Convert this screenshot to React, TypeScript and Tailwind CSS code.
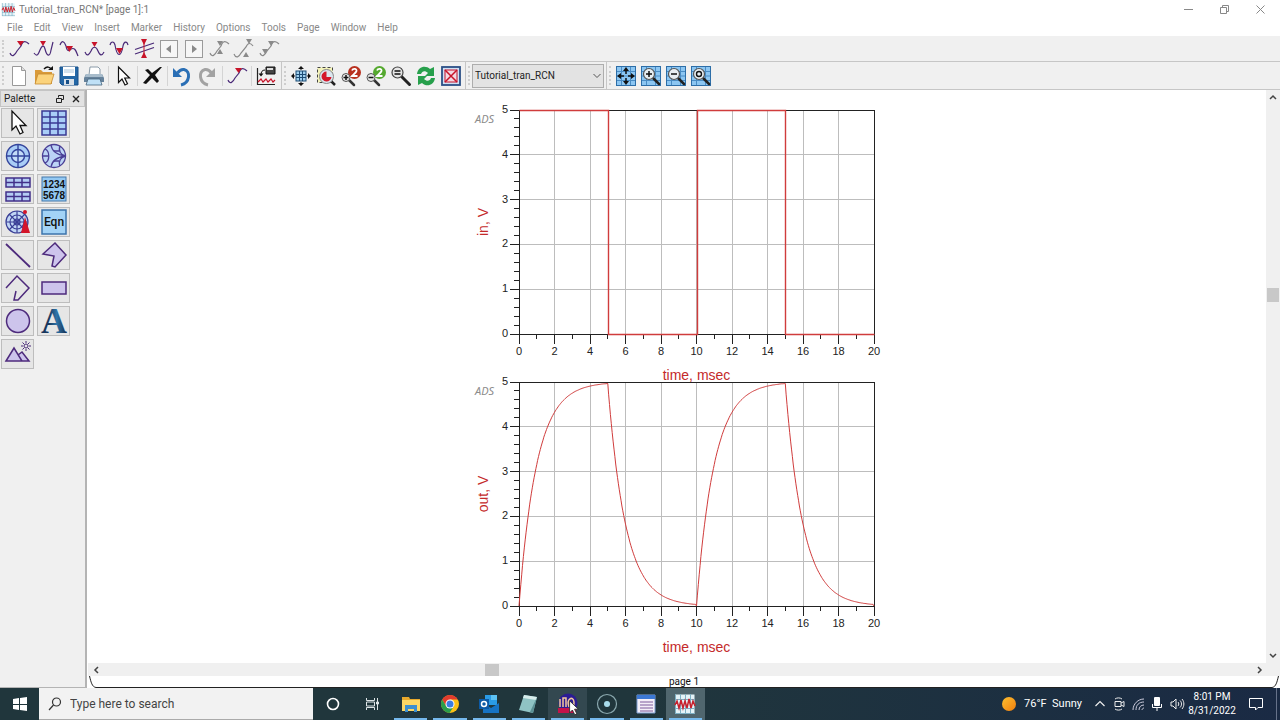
import type { ReactNode } from 'react'

const PURPLE = '#4a2a78'
const RED = '#c8142a'
const GRAY = '#8a8a8a'

const MENUS = ['File', 'Edit', 'View', 'Insert', 'Marker', 'History', 'Options', 'Tools', 'Page', 'Window', 'Help']

interface IconProps {
  children: ReactNode
  size?: number
  box?: number
}

function Icon({ children, size = 20, box = 20 }: IconProps) {
  return (
    <svg width={size} height={size} viewBox={`0 0 ${box} ${box}`} fill="none" className="shrink-0 overflow-visible">
      {children}
    </svg>
  )
}

/* ---------- Marker toolbar ---------- */

interface WaveProps {
  d: string
  marks: string[]
  color?: string
  mark?: string
}

function Wave({ d, marks, color = PURPLE, mark = RED }: WaveProps) {
  return (
    <Icon>
      <path d={d} stroke={color} strokeWidth="1.2" />
      {marks.map((m) => <path key={m} d={m} fill={mark} />)}
    </Icon>
  )
}

const RISING = 'M1 14C3 19 6 16 8 12L12 7C14 1 17 2 20 5'

function StepIcon({ d }: { d: string }) {
  return (
    <Icon>
      <rect x="1.5" y="1.5" width="17" height="17" stroke="#9a9a9a" fill="#f6f6f6" />
      <path d={d} fill={GRAY} />
    </Icon>
  )
}

const MARKER_TOOLS: { label: string; icon: ReactNode }[] = [
  { label: 'New marker', icon: <Wave d={RISING} marks={['M8 2h7l-3.500 5z']} /> },
  { label: 'Peak marker', icon: <Wave d="M0 14C3 18 4 16 6 11C8 6 10 6 11 10C13 18 16 18 17 11L19 3" marks={['M6 2h6l-3 5z']} /> },
  { label: 'Valley marker', icon: <Wave d="M1 6C3 1 5 2 7 7C8 13 10 12 12 10C16 8 17 12 19 17" marks={['M7 7h7l-3.500 6z']} /> },
  { label: 'Max marker', icon: <Wave d="M1 13C3 18 5 16 7 12C9 7 12 7 14 12C16 17 18 17 20 13" marks={['M7.500 3h6l-3 5z']} /> },
  { label: 'Min marker', icon: <Wave d="M1 6C2 2 5 2 6 6C8 18 12 19 14 7C15 2 18 2 19 6" marks={['M7 9h7l-3.500 6z']} /> },
  {
    label: 'Line marker',
    icon: (
      <Icon>
        <path d="M1 10.500L20 4M1 15L20 8.500" stroke={PURPLE} strokeWidth="1.300" />
        <path d="M10 0v19" stroke={RED} />
        <path d="M7 0h6l-3 6zM7 19h6l-3-6z" fill={RED} />
      </Icon>
    ),
  },
  { label: 'Previous point', icon: <StepIcon d="M12 6v8l-5-4z" /> },
  { label: 'Next point', icon: <StepIcon d="M8 6v8l5-4z" /> },
  { label: 'Delta markers', icon: <Wave d={RISING} marks={['M8 2h6l-3 5z', 'M8 15h6l-3-5z']} color={GRAY} mark={GRAY} /> },
  { label: 'Delta up', icon: <Wave d="M0 15C2 20 5 18 7 14L12 8C14 3 17 4 19 7" marks={['M12 0h6l-3 5z', 'M9 18h6l-3-5z']} color={GRAY} mark={GRAY} /> },
  { label: 'Delta down', icon: <Wave d={RISING} marks={['M9 2h6l-3 5z', 'M3 10h6l-3 5z']} color={GRAY} mark={GRAY} /> },
]

/* ---------- Main toolbar ---------- */

function Lens({ x, y, fill = '#e8eef2' }: { x: number; y: number; fill?: string }) {
  return (
    <>
      <path d={`M${x + 4} ${y + 4}L${x + 10} ${y + 10}`} stroke="#222" strokeWidth="2.500" strokeLinecap="round" />
      <circle cx={x} cy={y} r="5.500" fill={fill} stroke="#555" strokeWidth="1.200" />
    </>
  )
}

const newIcon = (
  <Icon>
    <path d="M3.500 .5h9l4 4v15h-13z" fill="#fff" stroke="#999" />
    <path d="M12.500 .5v4h4" fill="#ddd" stroke="#999" />
  </Icon>
)
const openIcon = (
  <Icon>
    <path d="M1 4h6l2 2h9v12H1z" fill="#d99a3a" />
    <path d="M4 8h16l-3 10H1z" fill="#fbd37c" stroke="#c58a30" strokeWidth=".8" />
    <path d="M10 3C13 0 16 1 17 3" stroke="#111" strokeWidth="1.500" />
    <path d="M14 4h5v-4z" fill="#111" />
  </Icon>
)
const saveIcon = (
  <Icon>
    <path d="M1 1h18v18H3l-2-2z" fill="#2467a6" stroke="#174f88" />
    <path d="M4 1h12v9H4z" fill="#fff" />
    <path d="M5 4h10M5 6h10" stroke="#a8c4dc" />
    <path d="M5 13h10v6H5z" fill="#d8e0e8" />
    <path d="M7 14h3v4H7z" fill="#174f88" />
  </Icon>
)
const printIcon = (
  <Icon>
    <path d="M6 1h8l2 2v6H5z" fill="#fff" stroke="#6f8494" strokeWidth=".8" />
    <path d="M2 8h16l2 4v4H0v-4z" fill="#66829b" />
    <path d="M2 8h16l1 3H1z" fill="#a8bccb" />
    <path d="M4 13h12l2 6H2z" fill="#bfe0f6" stroke="#46647e" strokeWidth=".8" />
  </Icon>
)
const pointerIcon = (
  <Icon>
    <path d="M5.500 1v15.500l3.500-3.500 3 6 2.500-1.200-2.800-5.800h4.800z" fill="#fff" stroke="#111" strokeWidth="1.200" />
  </Icon>
)
const deleteIcon = (
  <Icon>
    <path d="M2 4l3-1 4 4 8-6h2l-7 8 4 6-2 2-5-5-6 6-3-1 7-8z" fill="#111" />
  </Icon>
)
const undoIcon = (
  <Icon>
    <path d="M9 19C18 17 19 5 12 3.500C9 3 7 5 5.500 7" stroke="#2a6fb5" strokeWidth="3" />
    <path d="M1 2v9h9z" fill="#2a6fb5" />
  </Icon>
)
const redoIcon = (
  <Icon>
    <path d="M11 19C2 17 1 5 8 3.500C11 3 13 5 14.500 7" stroke="#a2a2a2" strokeWidth="3" />
    <path d="M18 2v9H9z" fill="#a2a2a2" />
  </Icon>
)
const plotIcon = (
  <Icon>
    <path d="M1.500 2v17M1 18.500h18" stroke="#222" strokeWidth="1.200" />
    <path d="M10 1h9v7h-9z" fill="#444" stroke="#111" />
    <path d="M11 2h6v2h-6z" fill="#ddd" />
    <path d="M9 4C6 4 5 6 5 9" stroke="#111" />
    <path d="M2.500 7.500h5l-2.500 3z" fill="#111" />
    <path d="M2 16l3-3 2 3 3-3 2 3 3-3 2 3 2-2" stroke={RED} strokeWidth="1.200" />
  </Icon>
)
const fitIcon = (
  <Icon>
    <rect x="5" y="5" width="10" height="10" fill="#9fd0ef" stroke="#1d4c74" />
    <path d="M8.500 5v10M11.500 5v10M5 8.500h10M5 11.500h10" stroke="#1d4c74" />
    <path d="M10 0l3 3H7zM10 20l3-3H7zM0 10l3-3v6zM20 10l-3-3v6z" fill="#111" />
    <path d="M10 2v2M10 16v2M2 10h2M16 10h2" stroke="#111" />
  </Icon>
)
const zoomAreaIcon = (
  <Icon>
    <rect x="1.500" y="1.500" width="15" height="15" fill="#f4f3b8" stroke="#444" strokeDasharray="3 2" />
    <path d="M14 14l5 5" stroke="#222" strokeWidth="2.500" />
    <circle cx="10.500" cy="10.500" r="7" fill="#dbe6ef" stroke="#888" />
    <path d="M10.500 5.500a5 5 0 1 0 5 5.500h-5z" fill="#d4182b" />
  </Icon>
)
function zoomTwo(color: string, plus: boolean) {
  return (
    <Icon>
      <path d="M8 14l5 5" stroke="#333" strokeWidth="2.500" strokeLinecap="round" />
      <circle cx="13.500" cy="6.500" r="6.500" fill={color} />
      <path d="M11 4.500c1-2.500 5-2 4.500.5-.3 1.500-2.500 3-4.500 5h5.500" stroke="#fff" strokeWidth="1.800" />
      <circle cx="5" cy="11.500" r="4" fill="#e6e6e6" stroke="#555" />
      <path d={plus ? 'M2.500 11.500h5M5 9v5' : 'M2.500 11.500h5'} stroke="#111" strokeWidth="1.500" />
    </Icon>
  )
}
const zoomEqIcon = (
  <Icon>
    <path d="M10.500 10.500l8 8" stroke="#222" strokeWidth="3" strokeLinecap="round" />
    <circle cx="6.500" cy="6.500" r="5.500" fill="#e6e6e6" stroke="#444" strokeWidth="1.200" />
    <path d="M3.500 5h6M3.500 8h6" stroke="#111" strokeWidth="1.300" />
  </Icon>
)
const refreshIcon = (
  <Icon>
    <path d="M1 8C2 0 10-1 14 3l4-2v9H9l3-3C9 4 6 5 5 8z" fill="#27a04c" />
    <path d="M19 12C18 20 10 21 6 17l-4 2v-9h9l-3 3c3 3 6 2 7-1z" fill="#27a04c" />
  </Icon>
)
const stopIcon = (
  <Icon>
    <rect x="1" y="1" width="18" height="18" fill="#cfe0f4" stroke="#2b4f86" strokeWidth="1.800" />
    <rect x="4" y="4" width="12" height="12" fill="#f3d9e2" stroke={RED} />
    <path d="M4 4l12 12M16 4L4 16" stroke={RED} strokeWidth="1.500" />
  </Icon>
)

function GridTile({ children }: { children: ReactNode }) {
  return (
    <Icon>
      <rect x=".5" y=".5" width="19" height="19" fill="#8cc6f2" stroke="#2d6ea8" />
      <path d="M5.500 1v18M14.500 1v18M1 5.500h18M1 10h18M1 14.500h18" stroke="#4a8cc4" />
      {children}
    </Icon>
  )
}

const FILE_GROUPS: { label: string; icon: ReactNode }[][] = [
  [
    { label: 'New', icon: newIcon },
    { label: 'Open', icon: openIcon },
    { label: 'Save', icon: saveIcon },
    { label: 'Print', icon: printIcon },
  ],
  [{ label: 'Select', icon: pointerIcon }],
  [{ label: 'Delete', icon: deleteIcon }],
  [{ label: 'Undo', icon: undoIcon }, { label: 'Redo', icon: redoIcon }],
  [{ label: 'Insert marker', icon: MARKER_TOOLS[0].icon }],
  [{ label: 'Insert plot', icon: plotIcon }],
]

const VIEW_TOOLS = [
  { label: 'View all', icon: fitIcon },
  { label: 'Zoom area', icon: zoomAreaIcon },
  { label: 'Zoom in by 2', icon: zoomTwo('#b8301f', true) },
  { label: 'Zoom out by 2', icon: zoomTwo('#55a92f', false) },
  { label: 'Zoom actual', icon: zoomEqIcon },
  { label: 'Refresh', icon: refreshIcon },
  { label: 'Stop', icon: stopIcon },
]

const PLOT_TOOLS = [
  {
    label: 'Fit plot',
    icon: (
      <GridTile>
        <path d="M10 1l3 4H7zM10 19l3-4H7zM1 10l4-3v6zM19 10l-4-3v6z" fill="#111" />
        <path d="M10 4v4M10 12v4M4 10h4M12 10h4" stroke="#111" strokeWidth="1.500" />
      </GridTile>
    ),
  },
  { label: 'Zoom in plot', icon: <GridTile><Lens x={8} y={8} /><path d="M5 8h6M8 5v6" stroke="#111" strokeWidth="1.500" /></GridTile> },
  { label: 'Zoom out plot', icon: <GridTile><Lens x={8} y={8} /><path d="M5 8h6" stroke="#111" strokeWidth="1.500" /></GridTile> },
  { label: 'Restore plot', icon: <GridTile><Lens x={8} y={8} /><circle cx="8" cy="8" r="2.500" stroke="#111" strokeWidth="1.400" /></GridTile> },
]

function ToolButton({ label, children }: { label: string; children: ReactNode }) {
  return (
    <button aria-label={label} className="flex h-6 w-[25px] shrink-0 items-center justify-center">
      {children}
    </button>
  )
}

function Grip() {
  return (
    <div className="flex w-[6px] shrink-0 justify-center self-stretch py-1">
      <div className="border-l-2 border-dotted border-[#cecece]" />
    </div>
  )
}

function Separator() {
  return (
    <div className="flex h-5 flex-1 justify-center">
      <div className="w-px bg-[#d4d4d4]" />
    </div>
  )
}

/* ---------- Palette ---------- */

const SHAPE = { stroke: '#4d2a7c', strokeWidth: 1.5, fill: '#cdc4ec' }

const PALETTE: { label: string; icon: ReactNode }[] = [
  { label: 'Pointer', icon: <path d="M8 2v19l4-4 4 8 3-1.500-3-7h6z" fill="#fff" stroke="#111" strokeWidth="1.300" /> },
  {
    label: 'Rectangular plot',
    icon: (
      <g stroke="#3a3a94" strokeWidth="1.500">
        <path d="M2 2h24v24H2z" fill="#a9cdf7" />
        <path d="M10 2v24M18 2v24M2 8h24M2 14h24M2 20h24" />
      </g>
    ),
  },
  {
    label: 'Polar plot',
    icon: (
      <g stroke="#33449c" strokeWidth="1.400">
        <circle cx="14" cy="14" r="11.500" fill="#a9cdf7" />
        <circle cx="14" cy="14" r="6.500" fill="#c4dcf8" />
        <path d="M14 2v24M2 14h24" />
      </g>
    ),
  },
  {
    label: 'Smith chart',
    icon: (
      <g stroke="#4a3f96" strokeWidth="1.300">
        <circle cx="14" cy="14" r="11.500" fill="#bcd4f6" />
        <path d="M2.500 14h6M25.500 14C18 13 12 10 11 3M25.500 14C18 15 12 18 11 25M25.500 14C21 13 18 9 20 4M25.500 14C21 15 18 19 20 24" />
        <path d="M5 7c5 2 5 12 0 14M14 9h5M14 19h5" />
      </g>
    ),
  },
  {
    label: 'Stacked plot',
    icon: (
      <g stroke="#42308a" strokeWidth="1.500">
        <path d="M2 3h24v9H2zM2 17h24v9H2z" fill="#b4ccf4" />
        <path d="M10 3v9M18 3v9M2 7.500h24M10 17v9M18 17v9M2 21.500h24" />
      </g>
    ),
  },
  {
    label: 'List',
    icon: (
      <>
        <rect x="2" y="2" width="24" height="24" fill="#94c9f3" stroke="#4278ac" />
        <text x="14" y="13" textAnchor="middle" fill="#111" className="font-['Liberation_Sans'] text-[10px] font-bold">1234</text>
        <text x="14" y="24" textAnchor="middle" fill="#111" className="font-['Liberation_Sans'] text-[10px] font-bold">5678</text>
      </>
    ),
  },
  {
    label: 'Antenna plot',
    icon: (
      <>
        <g stroke="#3a3f96" strokeWidth="1.200">
          <circle cx="13" cy="14" r="11" fill="#c1d6f5" />
          <circle cx="13" cy="14" r="7" />
          <circle cx="13" cy="14" r="3" />
          <path d="M13 3v22M2 14h22M5 6l16 16M21 6L5 22" />
        </g>
        <path d="M21 9l5 16h-9z" fill="#d3152a" />
        <circle cx="21" cy="4" r="2" fill="#d3152a" />
      </>
    ),
  },
  {
    label: 'Equation',
    icon: (
      <>
        <rect x="2" y="2" width="24" height="24" fill="#a3d3f6" stroke="#3c74ac" strokeWidth="1.500" />
        <text x="14" y="18" textAnchor="middle" fill="#111" className="font-['Roboto'] text-[12px] font-medium">Eqn</text>
      </>
    ),
  },
  { label: 'Line', icon: <path d="M2 3l24 23" {...SHAPE} strokeWidth="1.800" /> },
  { label: 'Polygon', icon: <path d="M15 2l11 12-11 12-3-1 2-10-11-2z" {...SHAPE} /> },
  { label: 'Polyline', icon: <path d="M2 14L13 2l12 12-11 12h-4l2-9" {...SHAPE} fill="none" /> },
  { label: 'Rectangle', icon: <path d="M2 8h24v12H2z" {...SHAPE} /> },
  { label: 'Circle', icon: <circle cx="14" cy="14" r="11.500" {...SHAPE} /> },
  {
    label: 'Text',
    icon: (
      <>
        <linearGradient id="letter" x1="0" x2="1" y1="0" y2="0">
          <stop offset=".3" stopColor="#17375e" />
          <stop offset=".6" stopColor="#2f74a8" />
          <stop offset="1" stopColor="#142c4c" />
        </linearGradient>
        <text x="14" y="26" textAnchor="middle" fill="url(#letter)" className="font-['Liberation_Serif'] text-[36px] font-bold">A</text>
      </>
    ),
  },
  {
    label: 'Image',
    icon: (
      <>
        <path d="M2 21L10 8l8 13zM14 15l4-3 7 9h-7" {...SHAPE} />
        <circle cx="22" cy="6" r="2" stroke={PURPLE} />
        <path d="M22 1v2M22 9v2M17 6h2M25 6h2M18.500 2.500l1.500 1.500M24 8l1.500 1.500M25.500 2.500L24 4M20 8l-1.500 1.500" stroke={PURPLE} />
      </>
    ),
  },
]

function Palette() {
  return (
    <aside className="flex w-[87px] shrink-0 flex-col border-r-2 border-b border-[#b4b4b4] bg-[#f0f0f0]">
      <header className="flex h-[17px] items-center border border-[#c4c4c4] bg-[#e2e2e2] pl-[3px] text-[10px] text-[#222]">
        <span className="flex-1">Palette</span>
        <button aria-label="Float palette" className="flex w-4 justify-center">
          <Icon size={8} box={8}>
            <path d="M2.500 2.500v-2h5v4h-2M.5 3.500h5v4h-5z" stroke="#222" />
          </Icon>
        </button>
        <button aria-label="Close palette" className="flex w-4 justify-center">
          <Icon size={8} box={8}>
            <path d="M1 1l6 6M7 1L1 7" stroke="#222" strokeWidth="1.400" />
          </Icon>
        </button>
      </header>
      <div className="grid grid-cols-[33px_33px] gap-[3px] px-px pt-px">
        {PALETTE.map((item) => (
          <button
            key={item.label}
            aria-label={item.label}
            className="flex h-[30px] items-center justify-center border border-[#bdbdbd] bg-[#e6e6e6]"
          >
            <Icon size={28} box={28}>{item.icon}</Icon>
          </button>
        ))}
      </div>
    </aside>
  )
}

/* ---------- Charts ---------- */

const PLOT = { left: 51, top: 8, width: 355, height: 224 }
const px = (t: number) => PLOT.left + (t / 20) * PLOT.width
const py = (v: number) => PLOT.top + PLOT.height - (v / 5) * PLOT.height

// Pixel centre, keeps straight edges sharp
const snap = (n: number) => Math.round(n) + 0.5

function pulse(): [number, number][] {
  return [[0, 5], [5, 5], [5, 0], [10, 0], [10, 5], [15, 5], [15, 0], [20, 0]]
}

// RC step response, tau = 1 msec, driven by the 10 msec pulse
function response(): [number, number][] {
  return Array.from({ length: 401 }, (_, i) => {
    const t = i / 20
    const phase = t % 10
    const v = phase <= 5 ? 5 * (1 - Math.exp(-phase)) : 4.97 * Math.exp(-(phase - 5))
    return [t, v]
  })
}

interface ChartProps {
  label: string
  points: [number, number][]
  square?: boolean
}

function Chart({ label, points, square = false }: ChartProps) {
  const right = PLOT.left + PLOT.width
  const bottom = PLOT.top + PLOT.height
  const line = points
    .map(([t, v]) => (square ? `${snap(px(t))},${snap(py(v))}` : `${px(t).toFixed(1)},${py(v).toFixed(1)}`))
    .join(' ')

  return (
    <svg width="418" height="272" className="shrink-0 overflow-visible font-['Liberation_Sans']">
      <g stroke="#bdbdbd" shapeRendering="crispEdges">
        {[1, 2, 3, 4].map((v) => <line key={v} x1={PLOT.left} x2={right} y1={py(v)} y2={py(v)} />)}
        {Array.from({ length: 9 }, (_, i) => (i + 1) * 2).map((t) => (
          <line key={t} x1={px(t)} x2={px(t)} y1={PLOT.top} y2={bottom} />
        ))}
      </g>
      <g stroke="#222" shapeRendering="crispEdges">
        <rect x={PLOT.left} y={PLOT.top} width={PLOT.width} height={PLOT.height} fill="none" />
        {Array.from({ length: 26 }, (_, i) => (
          <line key={i} x1={PLOT.left - (i % 5 === 0 ? 9 : 5)} x2={PLOT.left} y1={py(i / 5)} y2={py(i / 5)} />
        ))}
        {Array.from({ length: 21 }, (_, t) => (
          <line key={t} x1={px(t)} x2={px(t)} y1={bottom} y2={bottom + (t % 2 === 0 ? 10 : 5)} />
        ))}
      </g>
      <polyline points={line} fill="none" stroke="#d03c3c" strokeWidth={square ? 1.4 : 1} />
      <g fill="#222" className="text-[11px]">
        {[0, 1, 2, 3, 4, 5].map((v) => (
          <text key={v} x={PLOT.left - 11} y={py(v) + 3} textAnchor="end">{v}</text>
        ))}
        {Array.from({ length: 11 }, (_, i) => i * 2).map((t) => (
          <text key={t} x={px(t)} y={bottom + 21} textAnchor="middle">{t}</text>
        ))}
      </g>
      <g fill="#c42a2a" className="text-[14px]">
        <text x={px(10)} y={bottom + 46} textAnchor="middle">time, msec</text>
        <text transform={`translate(20 ${py(2.5)}) rotate(-90)`} textAnchor="middle">{label}</text>
      </g>
      <text x="7" y={PLOT.top + 13} fill="#8c8c8c" className="font-['Noto_Sans'] text-[11px] italic">ADS</text>
    </svg>
  )
}

/* ---------- Scroll bars ---------- */

function Chevron({ d }: { d: string }) {
  return (
    <Icon size={8} box={8}>
      <path d={d} stroke="#444" strokeWidth="1.500" />
    </Icon>
  )
}

function VerticalScroll() {
  return (
    <div className="flex w-[14px] shrink-0 flex-col items-center bg-[#f0f0f0]">
      <button aria-label="Scroll up" className="flex h-[14px] w-full items-center justify-center"><Chevron d="M1 6l3-3 3 3" /></button>
      <div className="grow-[184]" />
      <div className="h-[14px] w-3 bg-[#c8c8c8]" />
      <div className="grow-[347]" />
      <button aria-label="Scroll down" className="flex h-[14px] w-full items-center justify-center"><Chevron d="M1 2l3 3 3-3" /></button>
    </div>
  )
}

function HorizontalScroll() {
  return (
    <div className="flex h-[13px] shrink-0 items-center bg-[#f0f0f0]">
      <button aria-label="Scroll left" className="flex h-full w-4 items-center justify-center"><Chevron d="M6 1L3 4l3 3" /></button>
      <div className="grow-[381]" />
      <div className="h-3 w-[14px] bg-[#c8c8c8]" />
      <div className="grow-[754]" />
      <button aria-label="Scroll right" className="mr-3 flex h-full w-4 items-center justify-center"><Chevron d="M2 1l3 3-3 3" /></button>
    </div>
  )
}

/* ---------- Taskbar ---------- */

const APPS: { label: string; icon: ReactNode }[] = [
  {
    label: 'File Explorer',
    icon: (
      <>
        <path d="M1 3h7l1 2h10v3H1z" fill="#e8a92c" />
        <path d="M1 6h18v11H1z" fill="#fbd766" />
        <path d="M4 18v-7h12v7h-3v-3H7v3z" fill="#3b8fd0" />
      </>
    ),
  },
  {
    label: 'Chrome',
    icon: (
      <>
        <circle cx="10" cy="10" r="9" fill="#fbc116" />
        <path d="M2.200 5.500A9 9 0 0 1 17.800 5.500H10L6 12z" fill="#e23c2e" />
        <path d="M2.200 5.500A9 9 0 0 0 9.500 19l4.500-7-8 0z" fill="#2a9d4c" />
        <circle cx="10" cy="10" r="4.500" fill="#fff" />
        <circle cx="10" cy="10" r="3.500" fill="#3b7de0" />
      </>
    ),
  },
  {
    label: 'Outlook',
    icon: (
      <>
        <path d="M6 1h12v10H6z" fill="#2a9be6" />
        <path d="M12 1h6v5h-6z" fill="#5cc3f5" />
        <path d="M4 9l8 5 8-5v10H4z" fill="#1673c4" />
        <rect x="0" y="5" width="10" height="10" fill="#0c5aa6" />
        <circle cx="5" cy="10" r="2.500" stroke="#fff" strokeWidth="1.500" />
      </>
    ),
  },
  {
    label: 'Notepad',
    icon: (
      <>
        <path d="M6 1l13 2-4 16-14-3z" fill="#8fc3c4" />
        <path d="M6 1l13 2-1 3-13-2z" fill="#d7eceb" />
        <path d="M19 3l-4 16-3-1z" fill="#5b9094" />
      </>
    ),
  },
  {
    label: 'ADS',
    icon: (
      <>
        <circle cx="10" cy="9" r="9.500" fill="#2c1c94" />
        <path d="M0 14h18v5H0z" fill="#c3124a" />
        <path d="M2 13V5M5 13V4h3v9M11 13c-3-8 4-12 5-5 0 3-1 5-2 5" stroke="#f2c79c" strokeWidth="1.500" />
      </>
    ),
  },
  {
    label: 'Recorder',
    icon: (
      <>
        <circle cx="10" cy="10" r="9.500" stroke="#8aa8ae" strokeWidth="1.200" />
        <circle cx="10" cy="10" r="3" fill="#a9dcec" />
      </>
    ),
  },
  {
    label: 'Simulation status',
    icon: (
      <>
        <path d="M1 1h18v18H1z" fill="#f3eef8" stroke="#7c9ed2" />
        <path d="M1 1h18v4H1z" fill="#3c78d4" />
        <path d="M4 8h13M4 11h13M4 14h13M4 17h13" stroke="#7d5a9c" />
      </>
    ),
  },
  { label: 'Data display', icon: <DisplayGlyph /> },
]

function DisplayGlyph() {
  return (
    <>
      <rect x=".5" y=".5" width="19" height="19" fill="#e4f3f8" />
      <path d="M.5 0v20M5.500 0v20M10.500 0v20M15.500 0v20M0 5.500h20M0 14.500h20M0 19.500h20" stroke="#7fb0c4" />
      <path d="M0 11l2-4 2 7 2-8 2 8 2-7 2 7 2-9 2 9 2-7 2 5" stroke="#c8202c" strokeWidth="1.500" />
    </>
  )
}

function appClass(label: string) {
  return [
    'relative flex flex-1 items-center justify-center',
    label === 'Data display' ? 'bg-[#50666e]' :
    label === 'ADS'          ? 'bg-[#334850]' : '',
  ].join(' ')
}

function Taskbar() {
  return (
    <footer className="flex h-8 shrink-0 bg-linear-to-r from-[#20363c] from-50% to-[#1a2a44] text-white">
      <button aria-label="Start" className="flex w-[39px] items-center justify-center">
        <Icon size={14} box={14}>
          <path d="M0 2l6-1v6H0zM7 1l7-1v7H7zM0 8h6v5l-6-1zM7 8h7v6l-7-1z" fill="#fff" />
        </Icon>
      </button>
      <label className="flex w-[274px] items-center gap-2 border-b border-[#aaa] bg-[#f2f2f2] pl-[9px]">
        <Icon size={14} box={14}>
          <circle cx="8.500" cy="5" r="4" stroke="#333" strokeWidth="1.200" />
          <path d="M5.500 8L1 13" stroke="#333" strokeWidth="1.200" />
        </Icon>
        <input
          aria-label="Search"
          placeholder="Type here to search"
          className="min-w-0 flex-1 bg-transparent text-[12px] outline-none placeholder:text-[#444]"
        />
      </label>
      <button aria-label="Cortana" className="flex w-[39px] items-center justify-center">
        <Icon size={14} box={14}><circle cx="7" cy="7" r="5.500" stroke="#fff" strokeWidth="1.600" /></Icon>
      </button>
      <button aria-label="Task view" className="flex w-[39px] items-center justify-center">
        <Icon size={14} box={14}>
          <path d="M1.500 1v2.500h8V1M1.500 13v-2.500h8V13M1.500 5h8v4h-8zM12.500 1v12M11.500 5h2v2h-2z" stroke="#dde4e6" />
        </Icon>
      </button>
      <nav className="flex w-[314px]">
        {APPS.map((app) => (
          <button key={app.label} aria-label={app.label} className={appClass(app.label)}>
            <Icon>{app.icon}</Icon>
            <span className="absolute inset-x-[3px] bottom-0 h-[2px] bg-[#76b9ed]" />
            {app.label === 'ADS' && (
              <span className="absolute top-3 left-5">
                <Icon size={16}>
                  <path d="M2 1v15l3.500-3.500 3 6 2.500-1.200-2.800-5.800H13z" fill="#fff" stroke="#222" />
                </Icon>
              </span>
            )}
          </button>
        ))}
      </nav>
      <div className="ml-auto flex items-center">
        <button className="flex items-center gap-2 text-[11px] whitespace-pre">
          <span className="size-[14px] rounded-full bg-linear-to-br from-[#fdc02f] to-[#ef7d0b]" />
          76°F  Sunny
        </button>
        <div className="ml-3 flex items-center gap-[6px]">
          <Icon size={12} box={12}><path d="M1.500 8L6 3.500 10.500 8" stroke="#eee" strokeWidth="1.200" /></Icon>
          <Icon size={14} box={14}>
            <path d="M3 4.500h6v5H3zM9 6l3-1.500v5L9 8M3 2c2-1.500 5-1.500 7 0M3 12c2 1.500 5 1.500 7 0" stroke="#eee" />
          </Icon>
          <Icon size={12} box={12}>
            <path d="M1 12C1 6 6 1 12 1M4 12c0-5 3-8 8-8M7 12c0-3 2-5 5-5M10 12c0-1 1-2 2-2" stroke="#ccd" />
          </Icon>
          <Icon size={14} box={14}>
            <rect x="4" y="0" width="6" height="9" rx="1" fill="#fff" />
            <path d="M2.500 7v3.500h9V7M7 11v3" stroke="#fff" />
          </Icon>
          <Icon size={14} box={14}>
            <path d="M1 5h2l3-3v10L3 9H1zM8 5c1 1 1 3 0 4M10 3.500c2 2 2 5 0 7M12 2c2.500 3 2.500 7 0 10" stroke="#eee" />
          </Icon>
        </div>
        <div className="w-14 text-center text-[10px] leading-[14px]">
          <div>8:01 PM</div>
          <div>8/31/2022</div>
        </div>
        <button aria-label="Notifications" className="mr-1 flex w-8 justify-center">
          <Icon size={14} box={14}><path d="M.5 1.500h13v9H9l-2.500 2.500V10.500h-6z" stroke="#fff" /></Icon>
        </button>
        <div className="h-8 w-1 border-l border-[#66728a]" />
      </div>
    </footer>
  )
}

/* ---------- Window ---------- */

function TitleBar() {
  return (
    <header className="flex h-[18px] shrink-0 items-center bg-white px-[2px] text-[10px] text-[#777]">
      <Icon size={13}><DisplayGlyph /></Icon>
      <span className="ml-1 flex-1">Tutorial_tran_RCN* [page 1]:1</span>
      <button aria-label="Minimize" className="flex w-9 justify-center">
        <Icon size={9} box={9}><path d="M0 4.500h9" stroke="#888" /></Icon>
      </button>
      <button aria-label="Restore" className="flex w-9 justify-center">
        <Icon size={9} box={9}><path d="M2.500 2.500v-2h6v6h-2M.5 2.500h6v6h-6z" stroke="#888" /></Icon>
      </button>
      <button aria-label="Close" className="flex w-9 justify-center">
        <Icon size={9} box={9}><path d="M.5.500l8 8M8.500.500l-8 8" stroke="#888" /></Icon>
      </button>
    </header>
  )
}

function Toolbars() {
  return (
    <div className="shrink-0 bg-[#f0f0f0]">
      <div className="flex h-[26px] items-center border-b border-[#c6c6c6]">
        <Grip />
        {MARKER_TOOLS.map((tool) => <ToolButton key={tool.label} label={tool.label}>{tool.icon}</ToolButton>)}
      </div>
      <div className="flex h-7 items-stretch border-b border-[#c6c6c6]">
        <div className="flex w-[282px] items-center border-r border-[#c6c6c6] pr-[2px]">
          <Grip />
          {FILE_GROUPS.map((group, i) => (
            <div key={i} className="contents">
              {i > 0 && <Separator />}
              {group.map((tool) => <ToolButton key={tool.label} label={tool.label}>{tool.icon}</ToolButton>)}
            </div>
          ))}
        </div>
        <div className="flex items-center border-r border-[#c6c6c6] pr-[2px]">
          <Grip />
          {VIEW_TOOLS.map((tool) => <ToolButton key={tool.label} label={tool.label}>{tool.icon}</ToolButton>)}
        </div>
        <div className="flex items-center border-r border-[#c6c6c6] pr-[2px]">
          <Grip />
          <div className="relative">
            <select
              aria-label="Dataset"
              className="block h-6 w-[132px] appearance-none border border-[#adadad] bg-[#e3e3e3] pl-[2px] text-[10px] text-[#222]"
            >
              <option>Tutorial_tran_RCN</option>
            </select>
            <span className="pointer-events-none absolute top-2 right-[3px]">
              <Icon size={8} box={8}><path d="M.5 2l3.500 3.500L7.500 2" stroke="#555" /></Icon>
            </span>
          </div>
        </div>
        <div className="flex items-center">
          <Grip />
          {PLOT_TOOLS.map((tool) => <ToolButton key={tool.label} label={tool.label}>{tool.icon}</ToolButton>)}
        </div>
      </div>
    </div>
  )
}

export default function App() {
  return (
    <div className="flex h-screen flex-col overflow-hidden bg-white font-['Roboto',sans-serif]">
      <TitleBar />
      <nav className="flex h-[18px] shrink-0 items-center gap-[11px] bg-white pl-[7px] text-[10px] text-[#888]">
        {MENUS.map((menu) => <button key={menu}>{menu}</button>)}
      </nav>
      <Toolbars />
      <div className="flex min-h-0 flex-1">
        <Palette />
        <main className="ml-px flex min-w-0 flex-1 flex-col">
          <div className="flex min-h-0 flex-1">
            <div className="flex min-w-0 flex-1 flex-col items-center overflow-hidden pt-3">
              <Chart label="in, V" points={pulse()} square />
              <Chart label="out, V" points={response()} />
            </div>
            <VerticalScroll />
          </div>
          <HorizontalScroll />
          <div className="flex h-3 shrink-0 items-stretch">
            <svg width="8" height="12" fill="none"><path d="M1.500 0C3 6 4 11 8 11.500" stroke="#222" /></svg>
            <button className="flex flex-1 items-center justify-center border-b border-[#222] text-[10px] leading-[11px] text-[#111]">
              page 1
            </button>
            <svg width="8" height="12" fill="none"><path d="M6.500 0C5 6 4 11 0 11.500" stroke="#222" /></svg>
          </div>
        </main>
      </div>
      <Taskbar />
    </div>
  )
}
